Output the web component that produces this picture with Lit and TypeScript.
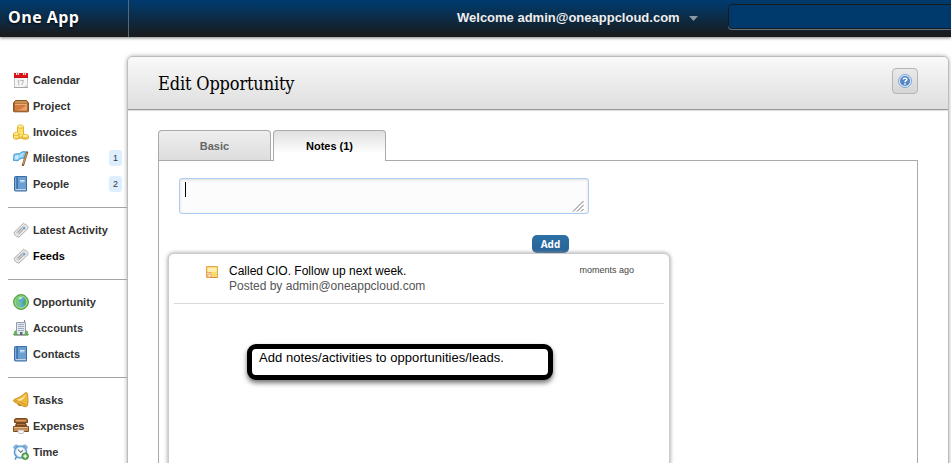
import { LitElement, html, css, svg, nothing, SVGTemplateResult } from "lit";
import { customElement, property } from "lit/decorators.js";
import { classMap } from "lit/directives/class-map.js";

const book = svg`
  <path d="M1.500 1.500q0-1 1-1h11v14.500h-11q-1 0-1-1z" fill="#4a80b8" stroke="#3a6ea5"/>
  <path d="M5 1h8v12H5z" fill="#6b9fd2"/><path d="M4.500 1v12" stroke="#3f74ab"/><path d="M2.500 1.500v12" stroke="#7fb0dc"/>
  <path d="M2.500 13.700H13" stroke="#dfe9f2"/>
  <path d="M7 4h4.500v2.500H7z" fill="#a8cbea"/><path d="M7 4.500h4.500" stroke="#d7e9f8"/>`;

const ticket = svg`
  <path d="M1 10.500 10.500 1.300l1.200 1 .8-.2 2.500 2.600-.2 1L15 6.500 5.800 15.300l-1-.9-1 .2-2.600-2.500.3-.9z" fill="#ececec" stroke="#a3a3a3" stroke-width=".9"/>
  <path d="M3.300 10.600l7.200-6.900 2 1.900-7.200 7z" fill="#d6d6d6" stroke="#c0c0c0" stroke-width=".7"/>
  <path d="M4.800 10.300l4.500-4.400M6 11.500l3.800-3.700" stroke="#999" stroke-width=".9"/>
  <path d="M10.500 5.200l1.700.2.100 1.500-1.400.5-1.100-1z" fill="#4d9be6"/>`;

const ICONS: Record<string, SVGTemplateResult> = {
  calendar: svg`
    <path d="M1.500 4h13v11.500h-13z" fill="#f6f6f6" stroke="#c3c3c3"/>
    <path d="M1 1h14v5H1z" fill="#e01218"/><path d="M1 5h14v1H1z" fill="#c4141a"/>
    <path d="M3 0h3v3H3zM10 0h3v3h-3z" fill="#f1e0e0"/><path d="M4 1h1v2H4zM11 1h1v2h-1z" fill="#a58080"/>
    <path d="M4.500 9l1.300-1v5.500M7.500 8.500h3L8.800 13.300" fill="none" stroke="#b4b4b4"/>
    <path d="M11 15l4-4v4z" fill="#d5d5d5"/><path d="M1 15.500h14" stroke="#a5a5a5"/>`,
  project: svg`
    <path d="M2.500 2.500h11l2 2.500v8q0 .8-.8.8H1.300q-.8 0-.8-.8V5z" fill="#a8682f" stroke="#8c5523"/>
    <path d="M3 3h10l1.500 2h-13z" fill="#c99257"/>
    <path d="M2 6h12v6.500H2z" fill="#d47a3b"/><path d="M2 12.500Q9 12 14 6v6.500z" fill="#e9a069"/>
    <path d="M2 6.300h12" stroke="#efbb88"/>`,
  invoices: svg`
    <path d="M4.500 2.500v11c0 1.300 6 1.300 6 0v-11z" fill="#fad74c" stroke="#e3b12b"/>
    <ellipse cx="7.500" cy="2.500" rx="3" ry="1.600" fill="#fff2a3" stroke="#e6bb3a"/>
    <path d="M5 5.500c1 1 4 1 5 0M5 8c1 1 4 1 5 0M5 10.500c1 1 4 1 5 0" fill="none" stroke="#fff2a3"/>
    <path d="M.5 9.700V14c0 1.500 5.500 1.500 5.500 0V9.700z" fill="#fad450" stroke="#dfaa25"/>
    <ellipse cx="3.200" cy="9.800" rx="2.700" ry="1.500" fill="#fff2a3" stroke="#e6bb3a"/>
    <path d="M1 12.300c1 1 3.600 1 4.600 0" fill="none" stroke="#fff2a3"/>
    <path d="M9 12.200V14c0 1.600 6.500 1.600 6.500 0v-1.800z" fill="#fad450" stroke="#dfaa25"/>
    <ellipse cx="12.200" cy="12" rx="3.200" ry="1.600" fill="#fff2a3" stroke="#e6bb3a"/>`,
  milestones: svg`
    <path d="M1 4.500c2.500-1.500 3.500 0 5.500-1C9 1.800 10.500.8 14 2.500L10.800 8.500C8.500 7.500 7 9 5.200 10.500c-2 .8-3-.5-4.700.2z" fill="#7cc6f6" stroke="#4a98d3"/>
    <path d="M2 5.500c2-.8 2.500.2 4.200-.3L5 9.200C4 9.700 3 9 1.600 9.500z" fill="#c9ebfd"/>
    <path d="M7.500 4l3.500-1.500-1.500 4-3 1.500z" fill="#b5e1fb"/>
    <path d="M14 2.500 10 15" stroke="#8d5e30" stroke-width="2.400" stroke-linecap="round"/><path d="M13.800 3 10.200 14.200" stroke="#d3a36b"/>`,
  people: book,
  contacts: book,
  activity: ticket,
  feeds: ticket,
  opportunity: svg`
    <circle cx="8" cy="8" r="7.400" fill="#79c75f" stroke="#49953d"/>
    <circle cx="8" cy="8" r="5.900" fill="#5baae0" stroke="#a5dc8a"/>
    <path d="M3 4.500C5 2 7.500 2 9 2.500l-.5 2-2 1-.8 2L8 9.500 7.300 13C4 12 2 8 3 4.500z" fill="#74c874"/>
    <path d="M11 3.500l2 3-.3 4-1.700 1.500-1.600-3 .7-2z" fill="#53ad66"/>
    <path d="M5 4.500l3-1.800 1.500 1-2.500 1.500z" fill="#d5f1dc"/>`,
  accounts: svg`
    <path d="M11.500 0v3" stroke="#888"/>
    <path d="M3.500 2.500h9v12h-9z" fill="#e4e8ee" stroke="#959eab"/>
    <path d="M5 4.500h6M5 6.500h6M5 8.500h6M5 10.500h6" stroke="#9cabc8"/>
    <path d="M7 12h2.500v3H7z" fill="#5f6975"/>
    <path d="M1 14.500c-.6-2 .4-4 1.500-4s2 2 1.500 4zM12 14.500c-.6-2 .4-4 1.500-4s2 2 1.500 4z" fill="#67b458"/>
    <path d="M0 14.500h5M11 14.500h5" stroke="#62a95a"/><path d="M1 15.500h14" stroke="#a6aea5"/>`,
  tasks: svg`
    <path d="M12 1q1-1 2 0l.5 1.200c.5 4 1 8.500-.3 11.800-1 1.200-3 .8-5-.2L1 9.700C0 9 .3 8 1.500 7.300 5 6 8.500 4.500 12 1z" fill="#f0b83a" stroke="#c98a1c" stroke-width=".9"/>
    <path d="M12.500 2.500C10.500 5.500 7 7 3.500 8l2.500 1.200c3.500-1 6-3.200 6.500-6.700z" fill="#ffeaa0"/>
    <path d="M1.500 8c3 .5 9 3.300 12 5.700" fill="none" stroke="#d19727"/>
    <path d="M4.500 11.300c0 2.500 2.300 3.500 4 2.200z" fill="#b87a18"/>`,
  expenses: svg`
    <path d="M2.500.5h11l1 1v3h-13v-3z" fill="#a4672f" stroke="#794a1c"/><path d="M3 2h10v1.500H3z" fill="#d29a60"/>
    <path d="M3 5h10l1.500 4h-13z" fill="#7b4a20"/><path d="M4 6.500h8" stroke="#b5763a"/>
    <path d="M.5 8.500h15v5H.5z" fill="#c58a50" stroke="#7e4c1f"/><path d="M1 9.500h14" stroke="#e8b988"/>
    <path d="M5 12h6v2l-1 1.500H6L5 14z" fill="#f5f5f5" stroke="#aaa" stroke-width=".7"/>`,
  time: svg`
    <path d="M1 4.500C0 2.500 2 .3 4.700 1.300zM14 4.500C15 2.500 13 .3 10.300 1.300z" fill="#9cc8ec" stroke="#5b93c6" stroke-width=".8"/>
    <path d="M3.500 13 2 15.500" stroke="#5b93c6" stroke-width="1.500"/>
    <circle cx="7.500" cy="8" r="6" fill="#f5fafd" stroke="#5c9ad0" stroke-width="1.600"/>
    <circle cx="7.500" cy="8" r="4.800" fill="none" stroke="#b5d6ef" stroke-width=".8"/>
    <path d="M5 5.500 7.500 8.300l2.500-1.800" fill="none" stroke="#6a7683" stroke-width="1.100"/>
    <circle cx="12.200" cy="12.200" r="3.300" fill="#4fa843" stroke="#34862c" stroke-width=".8"/>
    <path d="M12.200 10.200v4M10.200 12.200h4" stroke="#fff" stroke-width="1.300"/>`,
};

interface NavItem { icon: string; label: string; badge?: number; dark?: boolean }

const NAV: NavItem[][] = [
  [
    { icon: "calendar", label: "Calendar" },
    { icon: "project", label: "Project" },
    { icon: "invoices", label: "Invoices" },
    { icon: "milestones", label: "Milestones", badge: 1 },
    { icon: "people", label: "People", badge: 2 },
  ],
  [
    { icon: "activity", label: "Latest Activity" },
    { icon: "feeds", label: "Feeds", dark: true },
  ],
  [
    { icon: "opportunity", label: "Opportunity" },
    { icon: "accounts", label: "Accounts" },
    { icon: "contacts", label: "Contacts" },
  ],
  [
    { icon: "tasks", label: "Tasks" },
    { icon: "expenses", label: "Expenses" },
    { icon: "time", label: "Time" },
  ],
];

@customElement("side-nav")
export class SideNav extends LitElement {
  static styles = css`
    :host { display: block; width: 120px; flex: none; margin-left: 8px; padding-top: 20px; }
    .group { padding: 9px 0 10px; border-bottom: 1px solid #a3a3a3; }
    .group:last-child { border-bottom: 0; }
    .item { display: flex; align-items: center; height: 26px; padding-left: 5px;
      font: bold 11px/26px "Liberation Sans", Arial, sans-serif; color: #333; }
    .dark { color: #000; }
    svg { width: 16px; height: 16px; flex: none; margin-right: 4px; }
    .badge { margin-left: auto; margin-right: 6px; width: 13px; height: 16px; border-radius: 3px;
      background: #ddeeff; text-align: center; font-weight: normal; font-size: 9px; line-height: 17px; color: #333; }
  `;
  render() {
    return html`${NAV.map((g) => html`<div class="group">${g.map((i) => html`
      <div class=${classMap({ item: true, dark: !!i.dark })}>
        <svg viewBox="0 0 16 16">${ICONS[i.icon]}</svg><span>${i.label}</span>
        ${i.badge ? html`<span class="badge">${i.badge}</span>` : nothing}
      </div>`)}</div>`)}`;
  }
}

@customElement("note-card")
export class NoteCard extends LitElement {
  @property() title = "";
  @property() author = "";
  @property() when = "";
  static styles = css`
    :host { display: block; box-sizing: border-box; margin-left: 9px; width: 502px; height: 230px; border: 1px solid #ccc;
      border-radius: 6px; box-shadow: 0 0 4px #999; background: #fff; padding: 0 5px;
      font: 12px/15px "Liberation Sans", Arial, sans-serif; color: #555; }
    .post { display: flex; height: 49px; border-bottom: 1px solid #d9d9d9; }
    svg { width: 12px; height: 12px; margin: 12px 11px 0 32px; flex: none; }
    .text { padding-top: 10px; flex: 1; }
    .title { color: #000; }
    .when { font-size: 9px; line-height: 12px; padding: 10px 30px 0 0; color: #444; }
    .tip { display: flex; box-sizing: border-box; margin: 40px 0 0 73px; width: 306px; height: 36px; border: 5px solid #000;
      border-radius: 9px; background: #fff; box-shadow: 0 3px 5px rgba(0,0,0,.55); padding-left: 7px;
      color: #000; font-size: 13px; line-height: 18px; letter-spacing: .05px; white-space: nowrap; }
  `;
  render() {
    return html`
      <div class="post">
        <svg viewBox="0 0 12 12">
          <path d="M.5.500h11v11H.5z" fill="#f8dc72" stroke="#e5a654"/>
          <path d="M2 2h8.500v4H2z" fill="#fbefae"/>
          <path d="M1 6.500h4V11H1z" fill="#fff3d6" stroke="#e39a55" stroke-width=".8"/>
          <path d="M1.500 9.500 4 7.500" stroke="#e08c3e"/><path d="M5 11.500h6.500" stroke="#e08c3e"/>
        </svg>
        <div class="text"><div class="title">${this.title}</div><div>Posted by ${this.author}</div></div>
        <div class="when">${this.when}</div>
      </div>
      <div class="tip">Add notes/activities to opportunities/leads.</div>`;
  }
}

@customElement("app-root")
export class AppRoot extends LitElement {
  static styles = css`
    :host { display: flex; flex-direction: column; width: 951px; height: 463px; overflow: hidden; background: #fff;
      font-family: "Liberation Sans", Arial, sans-serif; }
    .bar { display: flex; height: 37px; flex: none; background: linear-gradient(#003a6c 5%, #1a1a1a);
      box-shadow: 0 1px 3px rgba(0,0,0,.5); color: #fff; }
    .brand { box-sizing: border-box; flex: none; width: 129px; padding-left: 8px; border-right: 1px solid #53697c;
      font: bold 16px/34px "Open Sans", "Noto Sans", sans-serif; letter-spacing: .45px; text-shadow: 0 1px 2px #000; }
    .welcome { flex: none; margin-left: 328px; width: 223px; font-size: 13px; font-weight: bold; line-height: 35px; color: #eee; white-space: nowrap; }
    .arrow { flex: none; width: 9px; height: 5px; margin: 16px 0 0 9px; background: #8b98a5; clip-path: polygon(0 0, 100% 0, 50% 100%); }
    .search { box-sizing: border-box; width: 240px; flex: none; margin: 4px 0 0 30px; height: 25px; background: #003a6c;
      border: 1px solid #151b20; border-radius: 4px; box-shadow: 0 1px 0 #66717b; }
    .body { display: flex; flex: 1; min-height: 0; align-items: flex-start; margin-top: 1px; }
    .panel { box-sizing: border-box; width: 822px; height: 430px; margin-top: 18px; flex: none; margin-left: -1px;
      border: 1px solid #bbb; border-radius: 6px; box-shadow: 0 0 4px #aaa; background: #fff; }
    .head { display: flex; box-sizing: border-box; justify-content: space-between; height: 53px; border-bottom: 1px solid #999;
      background: linear-gradient(#f9f9f9, #dedede); border-radius: 5px 5px 0 0; padding: 11px 30px 0 30px; box-shadow: 0 1px 1px #ddd; }
    .title { font: 18px/32px "DejaVu Serif Condensed", "DejaVu Serif", serif; color: #000; letter-spacing: -.15px; }
    .help { display: flex; align-items: center; justify-content: center; box-sizing: border-box; width: 26px; height: 26px;
      border: 1px solid #b5b5b5; border-radius: 4px; background: linear-gradient(#e9e9e9, #d6d6d6); }
    .help svg { width: 14px; height: 14px; }
    .tabs { position: relative; display: flex; gap: 2px; margin: 20px 0 0 30px; height: 31px; }
    .tab { box-sizing: border-box; width: 113px; height: 30px; border: 1px solid #aaa; border-bottom: 0; border-radius: 4px 4px 0 0;
      background: linear-gradient(#eee, #ddd); text-align: center; font-size: 11px; font-weight: bold; line-height: 31px; color: #666; }
    .tab.on { height: 31px; background: linear-gradient(#e0e0e0, #fff 75%); color: #000; }
    .content { box-sizing: border-box; width: 760px; height: 330px; margin: -1px 0 0 30px; border: 1px solid #aaa; }
    .entry { display: flex; justify-content: space-between; box-sizing: border-box; width: 410px; height: 36px; margin: 17px 0 0 20px;
      border: 1px solid #a9cbf7; border-radius: 3px; background: #fcfcfc; box-shadow: inset 0 1px 3px #ddd; padding: 3px 4px 1px 5px; }
    .caret { width: 1px; height: 15px; background: #000; }
    .grip { width: 12px; height: 12px; align-self: flex-end; }
    .add { margin: 21px 0 0 373px; width: 37px; height: 18px; border-radius: 5px; background: linear-gradient(#2d71a6, #256196);
      color: #fff; font: bold 10px/18px "Open Sans", "Noto Sans", sans-serif; text-align: center; }
  `;
  render() {
    return html`
      <div class="bar">
        <div class="brand">One App</div>
        <div class="welcome">Welcome admin@oneappcloud.com</div>
        <div class="arrow"></div>
        <div class="search"></div>
      </div>
      <div class="body">
        <side-nav></side-nav>
        <div class="panel">
          <div class="head">
            <div class="title">Edit Opportunity</div>
            <div class="help"><svg viewBox="0 0 14 14">
              <circle cx="7" cy="7" r="6.500" fill="#dceafa" stroke="#7da6d8"/>
              <circle cx="7" cy="7" r="5" fill="#5386c5"/>
              <path d="M5.200 5.600C5.200 3.600 9 3.700 8.800 5.600 8.700 6.700 7 6.700 7 8.300M7 9.300v1.400" fill="none" stroke="#fff" stroke-width="1.500"/>
            </svg></div>
          </div>
          <div class="tabs"><div class="tab">Basic</div><div class="tab on">Notes (1)</div></div>
          <div class="content">
            <div class="entry"><div class="caret"></div>
              <svg class="grip" viewBox="0 0 12 12"><path d="M1 11.500 11.500 1M5 11.500 11.500 5M9 11.500 11.500 9" stroke="#777" fill="none"/></svg>
            </div>
            <div class="add">Add</div>
            <note-card title="Called CIO. Follow up next week." author="admin@oneappcloud.com" when="moments ago"></note-card>
          </div>
        </div>
      </div>`;
  }
}
